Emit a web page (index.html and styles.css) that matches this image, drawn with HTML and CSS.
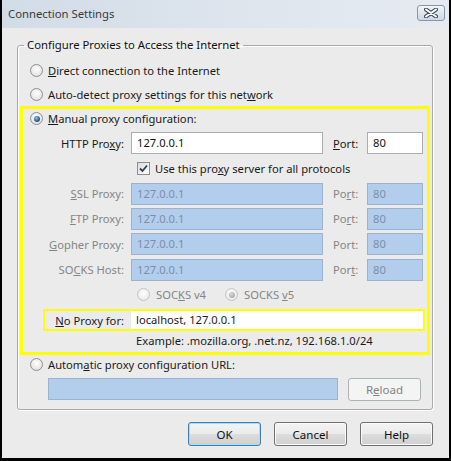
FILE: index.html
```html
<!DOCTYPE html>
<html>
<head>
<meta charset="utf-8">
<link rel="stylesheet" href="styles.css">
</head>
<body>
<div class="window">
  <div class="titlebar">
    <span class="title">Connection Settings</span>
    <span class="close">
      <svg width="14" height="10" viewBox="0 0 14 10">
        <path d="M2 1.5 L12 8.5 M12 1.5 L2 8.5" stroke="#3d4a5c" stroke-width="4" stroke-linecap="round"/>
        <path d="M2 1.5 L12 8.5 M12 1.5 L2 8.5" stroke="#ffffff" stroke-width="2" stroke-linecap="round"/>
      </svg>
    </span>
  </div>
  <div class="content">
    <fieldset class="group">
      <legend>Configure Proxies to Access the Internet</legend>
      <div class="radio-row first"><span class="radio"></span><span><u>D</u>irect connection to the Internet</span></div>
      <div class="radio-row"><span class="radio"></span><span>Auto-detect proxy settings for this net<u>w</u>ork</span></div>
      <div class="manual">
        <div class="radio-row manual-row"><span class="radio checked"></span><span><u>M</u>anual proxy configuration:</span></div>
        <div class="proxy-grid">
          <div class="plabel">HTTP Pro<u>x</u>y:</div>
          <div class="input">127.0.0.1</div>
          <div class="portlabel"><u>P</u>ort:</div>
          <div class="input">80</div>

          <div class="check-row"><span class="checkbox"><svg width="9" height="9" viewBox="0 0 9 9"><path d="M1 4.5 L3.5 7 L8 1.5" fill="none" stroke="#2b3f57" stroke-width="1.8"/></svg></span><span>Use this pro<u>x</u>y server for all protocols</span></div>

          <div class="plabel dis"><u>S</u>SL Proxy:</div>
          <div class="input dis">127.0.0.1</div>
          <div class="portlabel dis">Po<u>r</u>t:</div>
          <div class="input dis">80</div>

          <div class="plabel dis"><u>F</u>TP Proxy:</div>
          <div class="input dis">127.0.0.1</div>
          <div class="portlabel dis">Po<u>r</u>t:</div>
          <div class="input dis">80</div>

          <div class="plabel dis"><u>G</u>opher Proxy:</div>
          <div class="input dis">127.0.0.1</div>
          <div class="portlabel dis">Port:</div>
          <div class="input dis">80</div>

          <div class="plabel dis">SO<u>C</u>KS Host:</div>
          <div class="input dis">127.0.0.1</div>
          <div class="portlabel dis">Por<u>t</u>:</div>
          <div class="input dis">80</div>
        </div>
        <div class="socks-row dis">
          <span class="sopt"><span class="radio disabled"></span><span>SOC<u>K</u>S v4</span></span>
          <span class="sopt v5"><span class="radio checked disabled"></span><span>SOCKS <u>v</u>5</span></span>
        </div>
        <div class="noproxy">
          <div class="nlabel"><u>N</u>o Proxy for:</div>
          <div class="ninput">localhost, 127.0.0.1</div>
        </div>
        <div class="example">Example: .mozilla.org, .net.nz, 192.168.1.0/24</div>
      </div>
      <div class="radio-row auto-row"><span class="radio"></span><span>Autom<u>a</u>tic proxy configuration URL:</span></div>
      <div class="url-row">
        <div class="input dis url"></div>
        <div class="btn disabled reload">R<u>e</u>load</div>
      </div>
    </fieldset>
    <div class="buttons">
      <div class="btn default">OK</div>
      <div class="btn">Cancel</div>
      <div class="btn">Help</div>
    </div>
  </div>
</div>
</body>
</html>
```

FILE: styles.css
```css
body {
  margin: 0;
  font-family: "Noto Sans", "Open Sans", sans-serif;
  font-size: 11.2px;
  color: #1a1a1a;
}

.window {
  width: 451px;
  height: 461px;
  box-sizing: border-box;
  border-left: 2px solid #000;
  border-right: 2px solid #000;
  border-bottom: 3px solid #000;
  background: #ebebeb;
  display: flex;
  flex-direction: column;
}

.titlebar {
  height: 28px;
  flex: none;
  background: linear-gradient(to right, #d2dce7, #dfe6ee 60%, #e6ebf1);
  display: flex;
  align-items: center;
  justify-content: space-between;
  padding: 0 4px 0 6px;
}

.title {
  font-size: 11.3px;
  color: #3b3b3b;
  margin-top: -1px;
}

.close {
  width: 28px;
  height: 16px;
  box-sizing: border-box;
  border: 1px solid #8796ab;
  border-radius: 3px;
  background: linear-gradient(#f3f6fa, #dde5ee 50%, #cfd9e5);
  display: flex;
  align-items: center;
  justify-content: center;
  margin-top: -3px;
}

.content {
  padding: 9px 0 0 15px;
}

.group {
  width: 416px;
  box-sizing: border-box;
  margin: 0;
  padding: 0 2px 8px 2px;
  border: 1px solid #a9a9a9;
  border-radius: 3px;
  box-shadow: inset 1px 1px 0 #fff, 1px 1px 0 #fff;
}

.group legend {
  padding: 0 3px;
  margin-left: 4px;
  line-height: 16px;
  font-size: 11.3px;
  color: #111;
}

.radio-row {
  display: flex;
  align-items: center;
  gap: 5px;
  height: 24px;
  padding-left: 10px;
}

.radio-row.first {
  margin-top: 5px;
}

.radio {
  width: 13px;
  height: 13px;
  box-sizing: border-box;
  border-radius: 50%;
  border: 1px solid #8f8f8f;
  background: radial-gradient(circle at 50% 40%, #ffffff, #e4e4e4 70%, #d2d2d2);
  position: relative;
  flex: none;
}

.radio.checked::after {
  content: "";
  position: absolute;
  left: 2.5px;
  top: 2.5px;
  width: 6px;
  height: 6px;
  border-radius: 50%;
  background: radial-gradient(circle at 40% 35%, #8fc4ea, #2c5a86 60%, #1b3550);
}

.radio.disabled {
  border-color: #c4c4c4;
  background: radial-gradient(circle at 50% 40%, #ffffff, #ececec 70%, #e2e2e2);
}

.radio.disabled.checked::after {
  background: radial-gradient(circle at 40% 35%, #d8d8d8, #9b9b9b);
}

.manual {
  border: 3px solid #ffff00;
  padding-bottom: 1px;
}

.manual-row {
  height: 19px;
  padding-left: 7px;
}

.proxy-grid {
  margin-top: 3px;
  display: grid;
  grid-template-columns: 108px 192px 44px 56px;
  grid-template-rows: 24px 26px 25px 25px 26px 25px;
  align-items: center;
}

.plabel {
  text-align: right;
  padding-right: 7px;
}

.portlabel {
  padding-left: 10px;
}

.dis {
  color: #858585;
}

.input {
  height: 22px;
  box-sizing: border-box;
  border: 1px solid #abadb3;
  background: #fff;
  padding-left: 5px;
  line-height: 20px;
  color: #111;
}

.input.dis {
  background: #b3cdec;
  border-color: #9bb3d1;
  color: #7c8fa8;
}

.check-row {
  grid-column: 2 / 5;
  display: flex;
  align-items: center;
  gap: 5px;
  padding-left: 6px;
}

.checkbox {
  width: 13px;
  height: 13px;
  box-sizing: border-box;
  border: 1px solid #8f8f8f;
  background: linear-gradient(135deg, #dcdcdc, #fdfdfd);
  display: flex;
  align-items: center;
  justify-content: center;
  flex: none;
}

.socks-row {
  height: 25px;
  display: flex;
  align-items: center;
  padding-left: 114px;
}

.sopt {
  display: flex;
  align-items: center;
  gap: 6px;
}

.sopt.v5 {
  margin-left: 19px;
}

.noproxy {
  margin: 2px 2px 0 20px;
  height: 22px;
  box-sizing: border-box;
  border: 2px solid #ffff00;
  display: flex;
  align-items: center;
}

.nlabel {
  width: 86px;
  box-sizing: border-box;
  text-align: right;
  padding-right: 7px;
}

.ninput {
  flex: 1;
  height: 18px;
  background: #fff;
  padding-left: 5px;
  line-height: 18px;
}

.example {
  height: 20px;
  line-height: 20px;
  padding-left: 113px;
}

.auto-row {
  height: 18px;
}

.url-row {
  margin-top: 5px;
  display: flex;
  padding-left: 28px;
  gap: 10px;
}

.url {
  width: 290px;
}

.btn {
  width: 73px;
  height: 24px;
  box-sizing: border-box;
  border: 1px solid #707070;
  border-radius: 3px;
  background: linear-gradient(#f3f3f3, #ebebeb 50%, #dddddd 51%, #cfcfcf);
  box-shadow: inset 0 0 0 1px #fbfbfb;
  display: flex;
  align-items: center;
  justify-content: center;
  color: #111;
  font-size: 11.5px;
}

.btn.default {
  border-color: #3c7fb1;
  box-shadow: inset 0 0 0 1px #a6dcf7;
}

.btn.disabled {
  border-color: #adb2b5;
  background: #f4f4f4;
  box-shadow: none;
  color: #838383;
}

.reload {
  height: 23px;
}

.buttons {
  width: 416px;
  margin-top: 12px;
  display: flex;
  justify-content: flex-end;
  gap: 13px;
}
```
